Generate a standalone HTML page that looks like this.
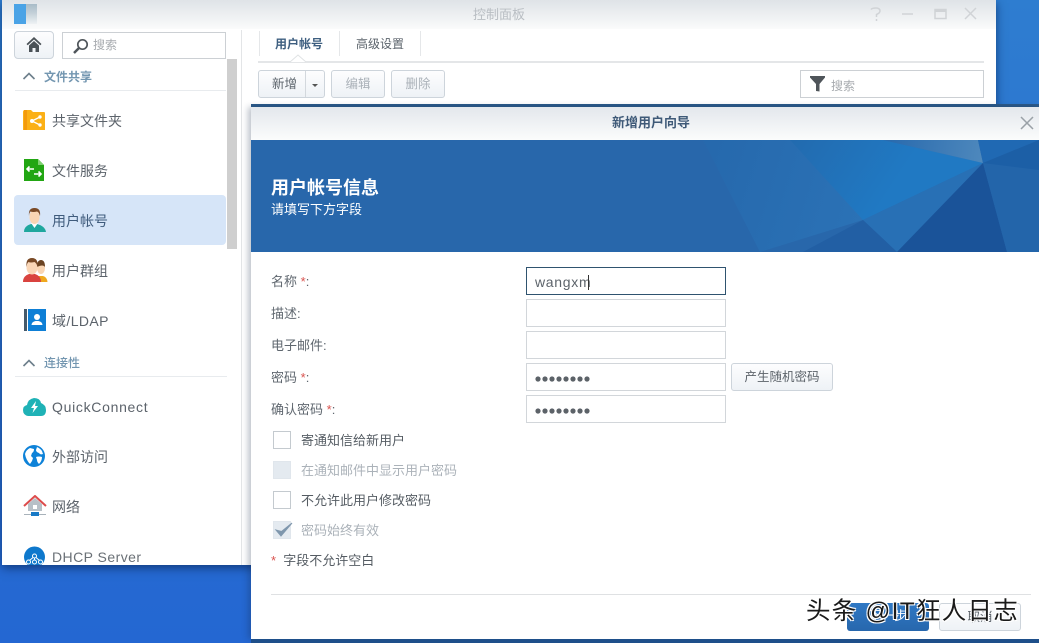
<!DOCTYPE html>
<html lang="zh"><head><meta charset="utf-8"><title>控制面板</title>
<style>
*{box-sizing:border-box}
html,body{margin:0;padding:0}
body{width:1039px;height:643px;position:relative;overflow:hidden;background:linear-gradient(180deg,#2e7dd0 0,#2a70d0 50%,#2467d2 100%);font-family:"Liberation Sans","Noto Sans CJK SC",sans-serif;font-size:13px;color:#5c646c}
.a{position:absolute;white-space:nowrap}
.win{left:2px;top:0;width:994px;height:565px;background:#fff;box-shadow:0 3px 9px rgba(10,40,90,.7);overflow:hidden}
.tbar{left:0;top:0;width:994px;height:29px;background:linear-gradient(180deg,#dfe3e7,#fafbfb)}
.sec{color:#7396b0;font-size:12.5px;font-weight:500}
.it{font-size:14px;color:#5c636b;line-height:20px}
.lat{letter-spacing:.7px}
.btn{border:1px solid #cdd4db;border-radius:3px;background:linear-gradient(180deg,#fdfdfe,#eef2f6);text-align:center;font-size:13px}
.inp{left:526px;width:200px;height:28px;border:1px solid #d2d6da;background:#fff}
.lb{left:271px;font-size:13px;color:#5f676f;line-height:18px}
.lb i,.st{font-style:normal;color:#d9534f}
.cb{left:273px;width:18px;height:18px;border:1px solid #c4cacf;background:#fff}
.cb.dis{background:#e4eaf0;border-color:#e0e6ec}
.ck{left:301px;font-size:13px;line-height:18px;color:#555c63}
.ck.dis{color:#abb2b9}
.wm{left:806px;top:595px;font-size:24.5px;line-height:34px;color:#1a1a1a;text-shadow:1px 1px 0 #fff,-1px -1px 0 #fff,1px -1px 0 #fff,-1px 1px 0 #fff;letter-spacing:1.250px}
</style></head><body>

<div class="a win">
  <div class="a tbar"></div>
  <div class="a" style="left:12px;top:4px;width:12px;height:20px;background:#4aa3e6"></div>
  <div class="a" style="left:24px;top:4px;width:11px;height:20px;background:linear-gradient(180deg,#a9bcc8,#c3d0d8 45%,#eef2f4)"></div>
  <div class="a" style="left:0;top:6px;width:994px;text-align:center;color:#b9bec3;font-size:13px;line-height:17px">控制面板</div>
  <svg class="a" style="left:865px;top:5px" width="120" height="18" viewBox="0 0 120 18" fill="none" stroke="#d0d3d6" stroke-width="1.500">
    <path d="M4 4.500 Q5 3 9 3 Q13 3 13 6 Q13 8 9.500 9.500 V12"/><path d="M9.500 14v2"/>
    <path d="M35 9h11"/>
    <rect x="68" y="4.500" width="11" height="9"/><path d="M68 6h11" stroke-width="2"/>
    <path d="M98 3l11 11M109 3l-11 11"/>
  </svg>

  <div class="a btn" style="left:12px;top:31px;width:40px;height:28px;border-radius:4px"></div>
  <svg class="a" style="left:24px;top:36px" width="16" height="17" viewBox="0 0 16 17"><path d="M8 1L0.500 8l1.200 1.200L8 3.500l6.300 5.700L15.500 8z" fill="#4b5257"/><path d="M3 9.500L8 5l5 4.500V16H9.500v-4h-3v4H3z" fill="#4b5257"/></svg>
  <div class="a" style="left:60px;top:32px;width:164px;height:27px;border:1px solid #ccd0d4"></div>
  <svg class="a" style="left:70px;top:38px" width="18" height="17" viewBox="0 0 18 17" fill="none" stroke="#4f555a"><circle cx="10.500" cy="6.500" r="4.700" stroke-width="1.700"/><path d="M7 10L2 15" stroke-width="2.500"/></svg>
  <div class="a" style="left:91px;top:37px;color:#a7abaf;font-size:12px;line-height:17px">搜索</div>

  <div class="a" style="left:225px;top:59px;width:10px;height:190px;background:#cfcfcf"></div>
  <div class="a" style="left:239px;top:30px;width:1px;height:535px;background:#e3e5e7"></div>

  <svg class="a" style="left:20px;top:71px" width="14" height="10" fill="none" stroke="#6d7f8b" stroke-width="1.600"><path d="M1.500 8L7 2.500 12.500 8"/></svg>
  <div class="a sec" style="left:42px;top:68px;line-height:18px;font-weight:700;font-size:12px">文件共享</div>
  <div class="a" style="left:13px;top:90px;width:211px;height:1px;background:#e8ebee"></div>

  <svg class="a" style="left:21px;top:109px" width="23" height="22" viewBox="0 0 23 22"><path d="M0 3q0-2 2-2h6l2 2h11q1 0 1 1v17H0z" fill="#fbb016"/><path d="M1 1h3v20H1z" fill="#f39a0c"/><g stroke="#fff" stroke-width="1.300"><path d="M9 12l8-4M9 12l8 4"/></g><circle cx="9" cy="12" r="2" fill="#fff"/><circle cx="17" cy="8" r="1.700" fill="#fff"/><circle cx="17" cy="16" r="1.700" fill="#fff"/></svg>
  <div class="a it" style="left:50px;top:111px">共享文件夹</div>

  <svg class="a" style="left:22px;top:159px" width="21" height="23" viewBox="0 0 21 23"><path d="M0 0h14l6 6v16H0z" fill="#22a613"/><path d="M14 0l6 6h-6z" fill="#7fd072"/><g fill="none" stroke="#fff" stroke-width="1.600"><path d="M3 10h7M5.500 7.500L3 10l2.500 2.500M10 15h7M14.500 12.500L17 15l-2.500 2.500"/></g></svg>
  <div class="a it" style="left:50px;top:161px">文件服务</div>

  <div class="a" style="left:12px;top:195px;width:212px;height:50px;background:#d6e5f8;border-radius:4px"></div>
  <svg class="a" style="left:21px;top:208px" width="24" height="24" viewBox="0 0 24 24"><path d="M1 24q0-6 7-8h6q8 2 9 8z" fill="#1fa79e"/><path d="M8 15l3.500 5L15 15z" fill="#fdfdfd"/><ellipse cx="11.500" cy="9" rx="5" ry="7" fill="#f9d5b3"/><path d="M6 8q-1-8 5.500-8 6.500 0 5.500 8-1-4-3-4.500-4 1-6.500 0Q6 5 6 8z" fill="#7a4a26"/></svg>
  <div class="a it" style="left:50px;top:211px;color:#3f5b7c">用户帐号</div>

  <svg class="a" style="left:20px;top:258px" width="26" height="24" viewBox="0 0 26 24"><ellipse cx="19" cy="10" rx="4" ry="6" fill="#f9d5b3"/><path d="M15 9q0-7 4-7 4 0 4 7-2-3-8 0z" fill="#6b4322"/><path d="M15 24v-6h6q4 1 4.500 6z" fill="#efa81e"/><path d="M1 24q0-6 6-8h6q6 2 6 8z" fill="#d9433f"/><ellipse cx="10" cy="9.500" rx="5.500" ry="7" fill="#fad6b6"/><path d="M4.500 9q-1-9 5.500-9 6.500 0 5.500 9-1-4-3-5-4 1-6 0Q5 5 4.500 9z" fill="#7a4a26"/></svg>
  <div class="a it" style="left:50px;top:261px">用户群组</div>

  <div class="a" style="left:22px;top:309px;width:3px;height:22px;background:#455a6b"></div>
  <div class="a" style="left:26px;top:309px;width:18px;height:22px;background:#0e7fd6"></div>
  <svg class="a" style="left:26px;top:309px" width="18" height="22" viewBox="0 0 18 22"><circle cx="9" cy="8" r="3" fill="#fff"/><path d="M3.500 16q0-3 4-4h3q4 1 4 4z" fill="#fff"/></svg>
  <div class="a it" style="left:50px;top:311px;letter-spacing:.4px">域/LDAP</div>

  <svg class="a" style="left:20px;top:358px" width="14" height="10" fill="none" stroke="#6d7f8b" stroke-width="1.600"><path d="M1.500 8L7 2.500 12.500 8"/></svg>
  <div class="a sec" style="left:42px;top:354px;line-height:18px;font-size:12px">连接性</div>
  <div class="a" style="left:13px;top:376px;width:212px;height:1px;background:#e8ebee"></div>

  <svg class="a" style="left:21px;top:396px" width="23" height="21" viewBox="0 0 23 21"><path d="M5 20q-5-1-5-6 0-4 4-5 1-6 7-7 6 0 7 5 5 2 5 7 0 6-5 6z" fill="#1fb2b6"/><path d="M13 5l-5 7h3l-1.500 5 5.500-7h-3z" fill="#fff"/></svg>
  <div class="a it lat" style="left:50px;top:397px">QuickConnect</div>

  <svg class="a" style="left:21px;top:445px" width="22" height="22" viewBox="0 0 22 22"><circle cx="11" cy="11" r="11" fill="#0e82d8"/><path d="M2 9q1-4 5-6l4 1q0 3-2 4l-1 3 2 2-1 3-2 3Q3 15 2 9zM14 2q5 2 6 7-3 1-4-1-3-1-3-3zM13 12q3-1 6 0 0 4-3 7-2-2-2-4z" fill="#fff"/></svg>
  <div class="a it" style="left:50px;top:447px">外部访问</div>

  <svg class="a" style="left:21px;top:495px" width="24" height="22" viewBox="0 0 24 22"><path d="M5 9v7h14V9l-7-6z" fill="#b7c0c7"/><rect x="10" y="10" width="4" height="4" fill="#fff"/><path d="M1 11L12 1l11 10" fill="none" stroke="#dd4b4b" stroke-width="2"/><path d="M1 19.500h22" stroke="#a8b2ba"/><rect x="8" y="17" width="8" height="4" fill="#1779c6"/></svg>
  <div class="a it" style="left:50px;top:497px">网络</div>

  <svg class="a" style="left:22px;top:546px" width="21" height="19" viewBox="0 0 21 19"><circle cx="10.500" cy="11" r="10.500" fill="#0e78cc"/><g fill="none" stroke="#fff"><circle cx="10.500" cy="10" r="2"/><circle cx="4.500" cy="16" r="2"/><circle cx="10.500" cy="16" r="2"/><circle cx="16.500" cy="16" r="2"/><path d="M9 11.500L5.500 14.500M10.500 12v2M12 11.500l3.500 3"/></g></svg>
  <div class="a it" style="left:50px;top:547px;color:#6a7076;letter-spacing:.45px">DHCP Server</div>

  <!-- tabs -->
  <div class="a" style="left:257px;top:31px;width:1px;height:25px;background:#e5e7e9"></div>
  <div class="a" style="left:337px;top:31px;width:1px;height:25px;background:#e5e7e9"></div>
  <div class="a" style="left:418px;top:31px;width:1px;height:25px;background:#e5e7e9"></div>
  <div class="a" style="left:273px;top:35px;font-size:12px;font-weight:700;color:#3e5f80;line-height:18px">用户帐号</div>
  <div class="a" style="left:354px;top:35px;font-size:12px;color:#5c646c;line-height:18px">高级设置</div>
  <div class="a" style="left:256px;top:61px;width:726px;height:2px;background:#e4e6e8"></div>
  <svg class="a" style="left:288px;top:54px" width="16" height="9"><path d="M0 8L8 1l8 7" fill="#fff" stroke="#dfe2e4"/></svg>

  <div class="a btn" style="left:256px;top:70px;width:67px;height:28px;line-height:27px;text-align:left;padding-left:13px;color:#5c646c;font-size:12.500px">新增</div>
  <div class="a" style="left:303px;top:71px;width:1px;height:26px;background:#d3d8dd"></div>
  <div class="a" style="left:310px;top:84px;border:3px solid transparent;border-top:3px solid #555;border-bottom:0;width:0;height:0"></div>
  <div class="a btn" style="left:329px;top:70px;width:54px;height:28px;line-height:27px;color:#aab1b8;font-size:12.500px">编辑</div>
  <div class="a btn" style="left:389px;top:70px;width:54px;height:28px;line-height:27px;color:#aab1b8;font-size:12.500px">删除</div>

  <div class="a" style="left:798px;top:70px;width:184px;height:28px;border:1px solid #ccd0d4"></div>
  <svg class="a" style="left:808px;top:76px" width="16" height="16" viewBox="0 0 16 16"><path d="M0 0h15v1.500L9.500 8v7.500L6 15V8L0 1.500z" fill="#4f555a"/></svg>
  <div class="a" style="left:829px;top:78px;color:#a7abaf;font-size:12px;line-height:17px">搜索</div>
</div>

<!-- dialog -->
<div class="a" style="left:251px;top:104px;width:788px;height:3px;background:#2b5a8a"></div>
<div class="a" style="left:251px;top:107px;width:788px;height:532px;background:#fff;box-shadow:-3px 0 6px rgba(20,40,70,.28)"></div>
<div class="a" style="left:251px;top:639px;width:788px;height:4px;background:#1e4f8a"></div>
<div class="a" style="left:251px;top:107px;width:788px;height:33px;background:linear-gradient(180deg,#e3e7ec,#fbfcfc)"></div>
<div class="a" style="left:251px;top:114px;width:800px;text-align:center;font-size:13px;font-weight:700;color:#3f5a78;line-height:18px">新增用户向导</div>
<svg class="a" style="left:1020px;top:116px" width="14" height="14" fill="none" stroke="#9aa1a7" stroke-width="1.500"><path d="M1 1l12 12M13 1L1 13"/></svg>

<svg class="a" style="left:251px;top:140px" width="788" height="112" viewBox="251 140 788 112">
  <defs>
    <linearGradient id="g1" gradientUnits="userSpaceOnUse" x1="760" y1="150" x2="870" y2="222"><stop offset="0" stop-color="#2368ab"/><stop offset="1" stop-color="#2079c3"/></linearGradient>
    <linearGradient id="g2" gradientUnits="userSpaceOnUse" x1="890" y1="145" x2="985" y2="160"><stop offset="0" stop-color="#2a6bae"/><stop offset="1" stop-color="#4f89bd"/></linearGradient>
    <linearGradient id="g3" gradientUnits="userSpaceOnUse" x1="700" y1="190" x2="860" y2="240"><stop offset="0" stop-color="#2669ad"/><stop offset="1" stop-color="#2b72b6"/></linearGradient>
  </defs>
  <rect x="251" y="140" width="788" height="112" fill="#2867ab"/>
  <polygon points="703,140 883,140 983,163 863,220 760,252" fill="url(#g3)"/>
  <polygon points="790,140 883,140 983,163 863,220" fill="url(#g1)"/>
  <polygon points="883,140 978,140 983,163" fill="url(#g2)"/>
  <polygon points="863,220 983,163 897,252" fill="#2870b5"/>
  <polygon points="863,220 897,252 803,252" fill="#225fa4"/>
  <polygon points="983,163 1007,252 897,252" fill="#1a5399"/>
  <polygon points="983,163 1039,160 1039,252 1007,252" fill="#2365aa"/>
  <polygon points="978,140 1039,140 983,163" fill="#2069b3"/>
  <polygon points="983,163 1039,140 1039,170" fill="#1c5fa6"/>
  <text x="271" y="194" font-family="Liberation Sans,Noto Sans CJK SC,sans-serif" font-size="18" font-weight="700" fill="#fff">用户帐号信息</text>
  <text x="271" y="214" font-family="Liberation Sans,Noto Sans CJK SC,sans-serif" font-size="13" fill="#fff">请填写下方字段</text>
</svg>

<div class="a lb" style="top:273px">名称 <i>*</i>:</div>
<div class="a lb" style="top:305px">描述:</div>
<div class="a lb" style="top:337px">电子邮件:</div>
<div class="a lb" style="top:369px">密码 <i>*</i>:</div>
<div class="a lb" style="top:401px">确认密码 <i>*</i>:</div>

<div class="a inp" style="top:267px;border-color:#2f536f"></div>
<div class="a inp" style="top:299px"></div>
<div class="a inp" style="top:331px"></div>
<div class="a inp" style="top:363px"></div>
<div class="a inp" style="top:395px"></div>
<div class="a" style="left:535px;top:274px;font-size:14px;letter-spacing:.7px;color:#5c636a;line-height:17px">wangxm</div>
<div class="a" style="left:588px;top:275px;width:1px;height:15px;background:#333"></div>
<svg class="a" style="left:535px;top:375px" width="58" height="40" fill="#5c6268">
  <g id="d"><circle cx="3" cy="4" r="2.600"/><circle cx="10" cy="4" r="2.600"/><circle cx="17" cy="4" r="2.600"/><circle cx="24" cy="4" r="2.600"/><circle cx="31" cy="4" r="2.600"/><circle cx="38" cy="4" r="2.600"/><circle cx="45" cy="4" r="2.600"/><circle cx="52" cy="4" r="2.600"/></g>
  <g transform="translate(0,32)"><circle cx="3" cy="4" r="2.600"/><circle cx="10" cy="4" r="2.600"/><circle cx="17" cy="4" r="2.600"/><circle cx="24" cy="4" r="2.600"/><circle cx="31" cy="4" r="2.600"/><circle cx="38" cy="4" r="2.600"/><circle cx="45" cy="4" r="2.600"/><circle cx="52" cy="4" r="2.600"/></g>
</svg>
<div class="a btn" style="left:731px;top:363px;width:102px;height:28px;line-height:27px;color:#5c636a;font-size:12.500px">产生随机密码</div>

<div class="a cb" style="top:431px"></div><div class="a ck" style="top:432px">寄通知信给新用户</div>
<div class="a cb dis" style="top:461px"></div><div class="a ck dis" style="top:462px">在通知邮件中显示用户密码</div>
<div class="a cb" style="top:491px"></div><div class="a ck" style="top:492px">不允许此用户修改密码</div>
<div class="a cb dis" style="top:521px"></div>
<svg class="a" style="left:274px;top:521px" width="20" height="18"><path d="M2 9l5 6L18 2 7.500 10.500z" fill="#7f97ad" stroke="#7f97ad"/></svg>
<div class="a ck dis" style="top:522px">密码始终有效</div>
<div class="a lb" style="top:552px;color:#555c63"><span class="st">*</span>&nbsp;&nbsp;字段不允许空白</div>

<div class="a" style="left:271px;top:594px;width:760px;height:1px;background:#dfe1e3"></div>
<div class="a" style="left:847px;top:603px;width:82px;height:28px;background:linear-gradient(180deg,#2f78c4,#2767ad);border-radius:3px;color:#fff;text-align:center;font-size:12.500px;line-height:27px">下一步</div>
<div class="a btn" style="left:939px;top:603px;width:82px;height:28px;font-size:12.500px;line-height:27px;color:#5c636a">取消</div>

<div class="a wm">头条 @IT狂人日志</div>
</body></html>
